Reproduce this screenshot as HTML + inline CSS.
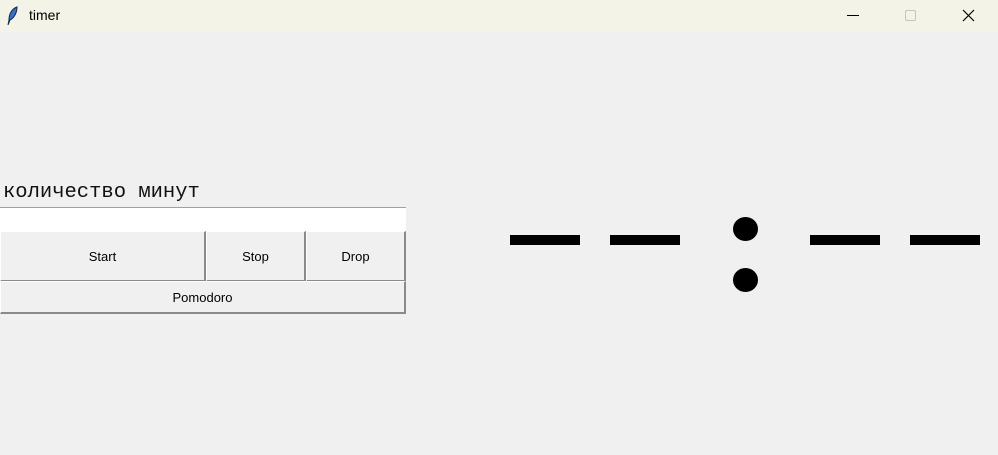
<!DOCTYPE html>
<html><head><meta charset="utf-8"><style>
*{margin:0;padding:0;box-sizing:border-box}
body{width:998px;height:455px;background:#f0f0f0;position:relative;overflow:hidden;font-family:"Liberation Sans","DejaVu Sans",sans-serif}
.tb{position:absolute;left:0;top:0;width:998px;height:32px;background:#f3f3e7}
.title{position:absolute;left:29px;top:7px;font-size:14px;color:#000}
.abs{position:absolute}
.btn{position:absolute;background:#f0f0f0;border:1px solid #fff;border-right:2px solid #8a8a8a;border-bottom:2px solid #8a8a8a;font-size:13px;color:#000;display:flex;align-items:center;justify-content:center}
.d{position:absolute;background:#000;height:10px;width:70px;top:235px}
.c{position:absolute;background:#000;border-radius:50%;width:25px;height:24px;left:733px}
</style></head><body>
<div class="tb">
<svg class="abs" style="left:5px;top:6px" width="16" height="20" viewBox="0 0 16 20"><path d="M12 1 C6 3 4 9 4 14 L3 19 L5 14 C9 12 12 7 12 1Z" fill="#3a70c0" stroke="#12284a" stroke-width="1"/></svg>
<div class="title">timer</div>
<div class="abs" style="left:847px;top:15px;width:12px;height:1px;background:#000"></div>
<div class="abs" style="left:905px;top:10px;width:11px;height:11px;border:1px solid #c4c4c0;border-radius:2px"></div>
<svg class="abs" style="left:962px;top:9px" width="13" height="13" viewBox="0 0 13 13"><path d="M1 1L12 12M12 1L1 12" stroke="#000" stroke-width="1.2"/></svg>
</div>
<div class="abs" style="left:3px;top:181px;font-family:'Liberation Mono','DejaVu Sans Mono',monospace;font-size:20.5px;color:#111;line-height:24px">количество минут</div>
<div class="abs" style="left:0;top:207px;width:406px;height:25px;background:#fff;border-top:1px solid #a0a0a0"></div>
<div class="btn" style="left:0;top:231px;width:206px;height:51px">Start</div>
<div class="btn" style="left:206px;top:231px;width:100px;height:51px">Stop</div>
<div class="btn" style="left:306px;top:231px;width:100px;height:51px">Drop</div>
<div class="btn" style="left:0;top:281px;width:406px;height:33px">Pomodoro</div>
<div class="d" style="left:510px"></div>
<div class="d" style="left:610px"></div>
<div class="d" style="left:810px"></div>
<div class="d" style="left:910px"></div>
<div class="c" style="top:217px"></div>
<div class="c" style="top:268px"></div>
</body></html>
